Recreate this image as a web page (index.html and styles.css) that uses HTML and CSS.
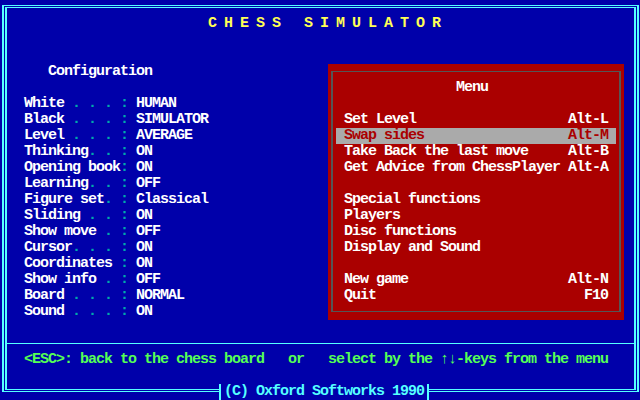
FILE: index.html
```html
<!DOCTYPE html>
<html>
<head>
<meta charset="utf-8">
<title>Chess Simulator</title>
<link rel="stylesheet" href="styles.css">
</head>
<body>
<div class="screen">
  <div class="frame">
    <div class="inner">
      <div class="title">C H E S S   S I M U L A T O R</div>
      <div class="main">
        <div class="config">
          <div class="cfg-head">Configuration</div>
          <div class="row-gap"></div>
          <div class="opt">White<span class="dim"> . . . :</span> HUMAN</div>
          <div class="opt">Black<span class="dim"> . . . :</span> SIMULATOR</div>
          <div class="opt">Level<span class="dim"> . . . :</span> AVERAGE</div>
          <div class="opt">Thinking<span class="dim">. . :</span> ON</div>
          <div class="opt">Opening book<span class="dim">:</span> ON</div>
          <div class="opt">Learning<span class="dim">. . :</span> OFF</div>
          <div class="opt">Figure set<span class="dim">. :</span> Classical</div>
          <div class="opt">Sliding<span class="dim"> . . :</span> ON</div>
          <div class="opt">Show move<span class="dim"> . :</span> OFF</div>
          <div class="opt">Cursor<span class="dim">. . . :</span> ON</div>
          <div class="opt">Coordinates<span class="dim"> :</span> ON</div>
          <div class="opt">Show info<span class="dim"> . :</span> OFF</div>
          <div class="opt">Board<span class="dim"> . . . :</span> NORMAL</div>
          <div class="opt">Sound<span class="dim"> . . . :</span> ON</div>
        </div>
        <div class="menu">
          <div class="menu-box">
            <div class="menu-title">Menu</div>
            <div class="row-gap"></div>
            <div class="item"><span>Set Level</span><span>Alt-L</span></div>
            <div class="item sel"><span>Swap sides</span><span>Alt-M</span></div>
            <div class="item"><span>Take Back the last move</span><span>Alt-B</span></div>
            <div class="item"><span>Get Advice from ChessPlayer</span><span>Alt-A</span></div>
            <div class="row-gap"></div>
            <div class="item"><span>Special functions</span></div>
            <div class="item"><span>Players</span></div>
            <div class="item"><span>Disc functions</span></div>
            <div class="item"><span>Display and Sound</span></div>
            <div class="row-gap"></div>
            <div class="item"><span>New game</span><span>Alt-N</span></div>
            <div class="item"><span>Quit</span><span>F10</span></div>
          </div>
        </div>
      </div>
      <div class="sep"></div>
      <div class="status">&lt;ESC&gt;: back to the chess board   or   select by the ↑↓-keys from the menu</div>
    </div>
  </div>
  <div class="copyright">(C) Oxford Softworks 1990</div>
</div>
</body>
</html>
```

FILE: styles.css
```css
* {
  box-sizing: border-box;
  margin: 0;
  padding: 0;
}

html,
body {
  background: #0000aa;
}

body {
  width: 640px;
  height: 400px;
  overflow: hidden;
  font-family: "Liberation Mono", "DejaVu Sans Mono", monospace;
  font-weight: bold;
  font-size: 15px;
  letter-spacing: -1px;
  line-height: 16px;
  color: #ffffff;
}

.screen {
  position: relative;
  width: 640px;
  height: 400px;
  padding: 5px 1px 8px 2px;
}

.frame {
  height: 100%;
  border: solid #55ffff;
  border-width: 1px 2px;
  padding: 1px;
}

.inner {
  height: 100%;
  border: solid #55ffff;
  border-width: 1px 2px;
}

.title {
  height: 16px;
  margin-top: 8px;
  margin-bottom: 32px;
  padding-left: 201px;
  color: #ffff55;
  white-space: pre;
}

.main {
  display: flex;
  align-items: flex-start;
}

.config {
  width: 321px;
  flex: none;
}

.cfg-head {
  height: 16px;
  padding-left: 41px;
  white-space: pre;
}

.row-gap {
  height: 16px;
}

.opt {
  height: 16px;
  padding-left: 17px;
  white-space: pre;
}

.dim {
  color: #00aaaa;
}

.menu {
  width: 296px;
  flex: none;
  background: #aa0000;
  padding: 7px 3px 8px 3px;
}

.menu-box {
  border: solid #555555;
  border-width: 1px 2px;
  padding: 8px 0 7px 0;
}

.menu-title {
  height: 16px;
  margin: 0 3px;
  padding-left: 120px;
  white-space: pre;
}

.item {
  display: flex;
  justify-content: space-between;
  height: 16px;
  margin: 0 3px;
  padding: 0 8px;
  white-space: pre;
}

.item.sel {
  background: #aaaaaa;
  color: #aa0000;
}

.sep {
  height: 1px;
  margin-top: 23px;
  background: #55ffff;
}

.status {
  height: 16px;
  margin-top: 8px;
  padding-left: 17px;
  color: #55ff55;
  white-space: pre;
}

.copyright {
  position: absolute;
  left: 219px;
  top: 384px;
  height: 16px;
  padding: 0 3px;
  border-left: 2px solid #55ffff;
  border-right: 2px solid #55ffff;
  background: #0000aa;
  color: #55ffff;
  white-space: pre;
}
```
